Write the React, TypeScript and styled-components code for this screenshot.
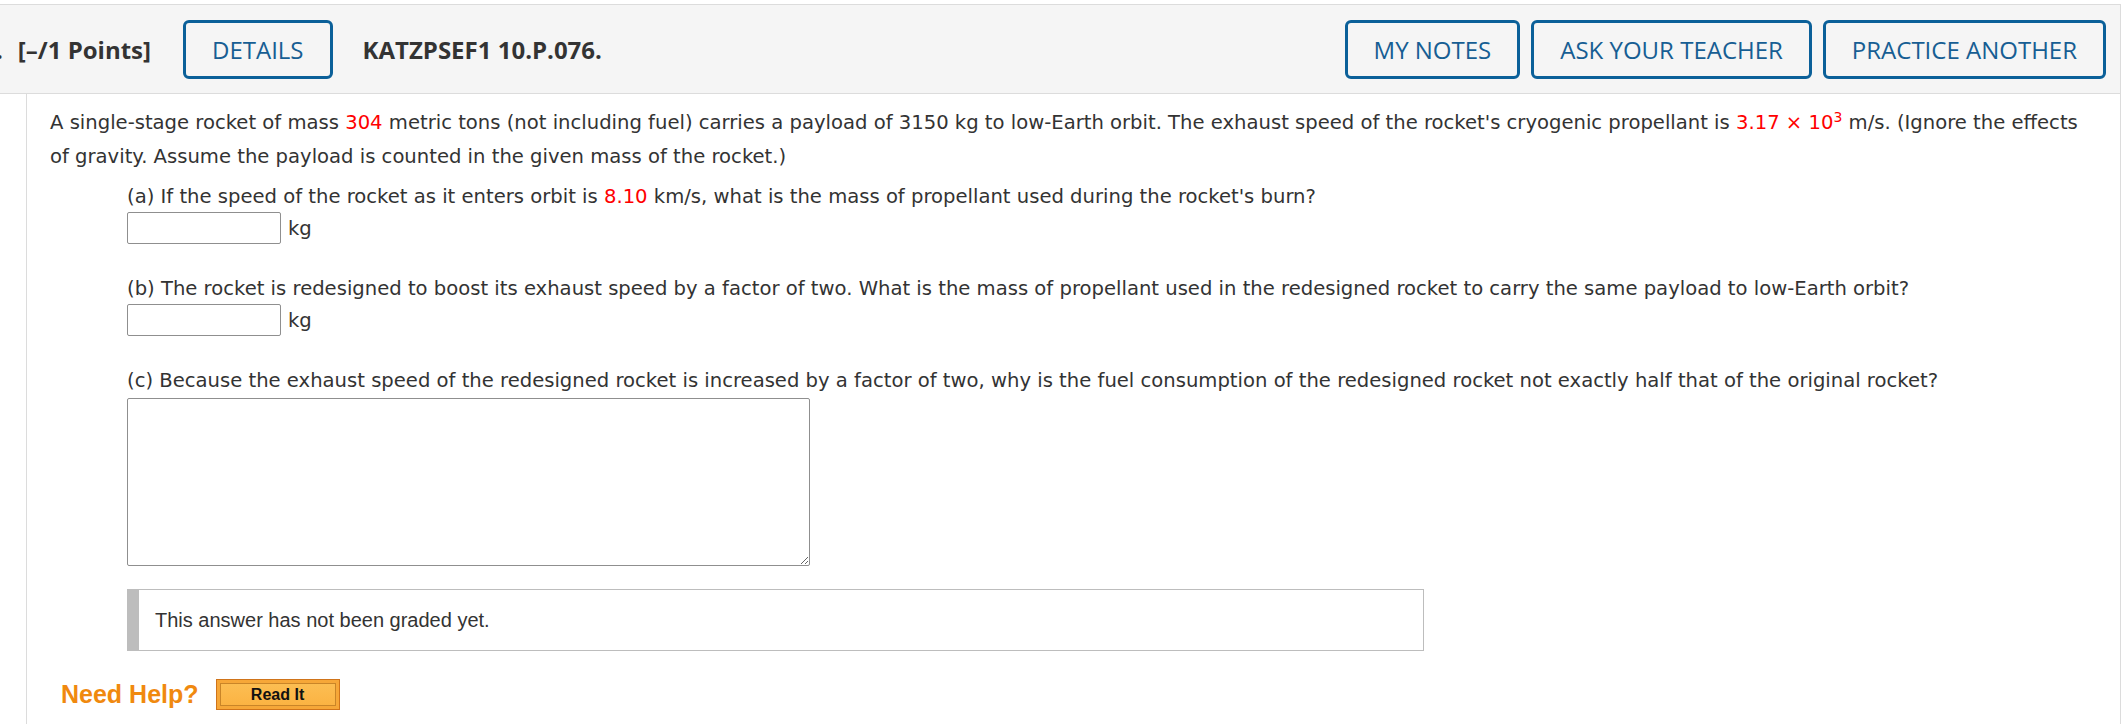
import React from "react";
import styled, { createGlobalStyle } from "styled-components";

const GlobalStyle = createGlobalStyle`
  html, body { margin: 0; padding: 0; background: #fff; }
  body {
    font-family: "DejaVu Sans", Verdana, sans-serif;
    color: #333;
    overflow: hidden;
  }
`;

const Page = styled.div`
  width: 2121px;
  padding-top: 4px;
`;

const Header = styled.header`
  box-sizing: border-box;
  height: 90px;
  display: flex;
  align-items: center;
  background: #f5f5f5;
  border: 1px solid #dcdcdc;
  border-left: none;
  padding-right: 14px;
  font-family: "Open Sans", "Liberation Sans", sans-serif;
`;

const QNum = styled.span`
  font-size: 24px;
  font-weight: 700;
  color: #333;
  margin-left: -4px;
`;

const Points = styled.span`
  font-size: 24px;
  font-weight: 700;
  color: #333;
  margin-left: 15px;
  margin-right: 32px;
`;

const Code = styled.span`
  font-size: 24px;
  font-weight: 700;
  color: #333;
  margin-left: 30px;
`;

const Spacer = styled.div`
  flex: 1;
`;

const Actions = styled.div`
  display: flex;
  gap: 11px;
`;

const OutlineButton = styled.button`
  box-sizing: border-box;
  height: 59px;
  padding: 0 26px;
  background: transparent;
  border: 3px solid #0b6099;
  border-radius: 6px;
  font-family: "Open Sans", "Liberation Sans", sans-serif;
  font-size: 24px;
  color: #175e93;
  cursor: pointer;
`;

const Body = styled.main`
  box-sizing: border-box;
  margin-left: 26px;
  min-height: 631px;
  border-left: 1px solid #dcdcdc;
  border-right: 1px solid #dcdcdc;
  padding: 12px 0 0 23px;
`;

const Intro = styled.p`
  margin: 0;
  font-size: 19.6px;
  line-height: 34px;
  padding-right: 30px;
`;

const Red = styled.span`
  color: #ff0000;
`;

const Sup = styled.sup`
  font-size: 14px;
  line-height: 0;
  vertical-align: 7px;
`;

const Parts = styled.div`
  padding-left: 77px;
`;

const Part = styled.section<{ $top: number }>`
  margin-top: ${(p) => p.$top}px;
`;

const Prompt = styled.div`
  font-size: 19.6px;
  line-height: 28px;
`;

const AnswerRow = styled.div`
  display: flex;
  align-items: center;
  gap: 7px;
  margin-top: 1px;
  font-size: 19.6px;
`;

const NumberInput = styled.input`
  box-sizing: border-box;
  width: 154px;
  height: 32px;
  border: 1px solid #8f8f8f;
  border-radius: 2px;
  background: #fff;
  margin: 0;
`;

const Essay = styled.textarea`
  display: block;
  box-sizing: border-box;
  width: 683px;
  height: 168px;
  margin-top: 3px;
  border: 1px solid #8f8f8f;
  border-radius: 2px;
  background: #fff;
`;

const Grade = styled.div`
  box-sizing: border-box;
  width: 1297px;
  height: 62px;
  margin-top: 23px;
  display: flex;
  align-items: center;
  border: 1px solid #bdbdbd;
  border-left: 12px solid #bdbdbd;
  padding-left: 16px;
  font-family: "Liberation Sans", Arial, sans-serif;
  font-size: 20px;
  color: #333;
`;

const Help = styled.div`
  display: flex;
  align-items: center;
  gap: 17px;
  margin-top: 28px;
  margin-left: 11px;
`;

const HelpLabel = styled.span`
  font-family: "Liberation Sans", Arial, sans-serif;
  font-weight: 700;
  font-size: 25px;
  color: #f0890f;
`;

const ReadIt = styled.button`
  box-sizing: border-box;
  width: 124px;
  height: 31px;
  padding: 0;
  border: 1px solid #d0741a;
  background: linear-gradient(#fcc055, #fbb140);
  box-shadow: inset 0 0 0 3px #f6a738, inset 0 0 0 4px #c98528;
  font-family: "Liberation Sans", Arial, sans-serif;
  font-weight: 700;
  font-size: 16px;
  color: #111;
  cursor: pointer;
`;

export default function App() {
  return (
    <>
      <GlobalStyle />
      <Page>
        <Header>
          <QNum>.</QNum>
          <Points>[–/1 Points]</Points>
          <OutlineButton>DETAILS</OutlineButton>
          <Code>KATZPSEF1 10.P.076.</Code>
          <Spacer />
          <Actions>
            <OutlineButton>MY NOTES</OutlineButton>
            <OutlineButton>ASK YOUR TEACHER</OutlineButton>
            <OutlineButton>PRACTICE ANOTHER</OutlineButton>
          </Actions>
        </Header>
        <Body>
          <Intro>
            A single-stage rocket of mass <Red>304</Red> metric tons (not including fuel) carries a
            payload of 3150 kg to low-Earth orbit. The exhaust speed of the rocket's cryogenic
            propellant is{" "}
            <Red>
              3.17 × 10<Sup>3</Sup>
            </Red>{" "}
            m/s. (Ignore the effects of gravity. Assume the payload is counted in the given mass of
            the rocket.)
          </Intro>
          <Parts>
            <Part $top={9}>
              <Prompt>
                (a) If the speed of the rocket as it enters orbit is <Red>8.10</Red> km/s, what is
                the mass of propellant used during the rocket's burn?
              </Prompt>
              <AnswerRow>
                <NumberInput type="text" />
                <span>kg</span>
              </AnswerRow>
            </Part>
            <Part $top={31}>
              <Prompt>
                (b) The rocket is redesigned to boost its exhaust speed by a factor of two. What is
                the mass of propellant used in the redesigned rocket to carry the same payload to
                low-Earth orbit?
              </Prompt>
              <AnswerRow>
                <NumberInput type="text" />
                <span>kg</span>
              </AnswerRow>
            </Part>
            <Part $top={31}>
              <Prompt>
                (c) Because the exhaust speed of the redesigned rocket is increased by a factor of
                two, why is the fuel consumption of the redesigned rocket not exactly half that of
                the original rocket?
              </Prompt>
              <Essay />
            </Part>
            <Grade>This answer has not been graded yet.</Grade>
          </Parts>
          <Help>
            <HelpLabel>Need Help?</HelpLabel>
            <ReadIt>Read It</ReadIt>
          </Help>
        </Body>
      </Page>
    </>
  );
}
